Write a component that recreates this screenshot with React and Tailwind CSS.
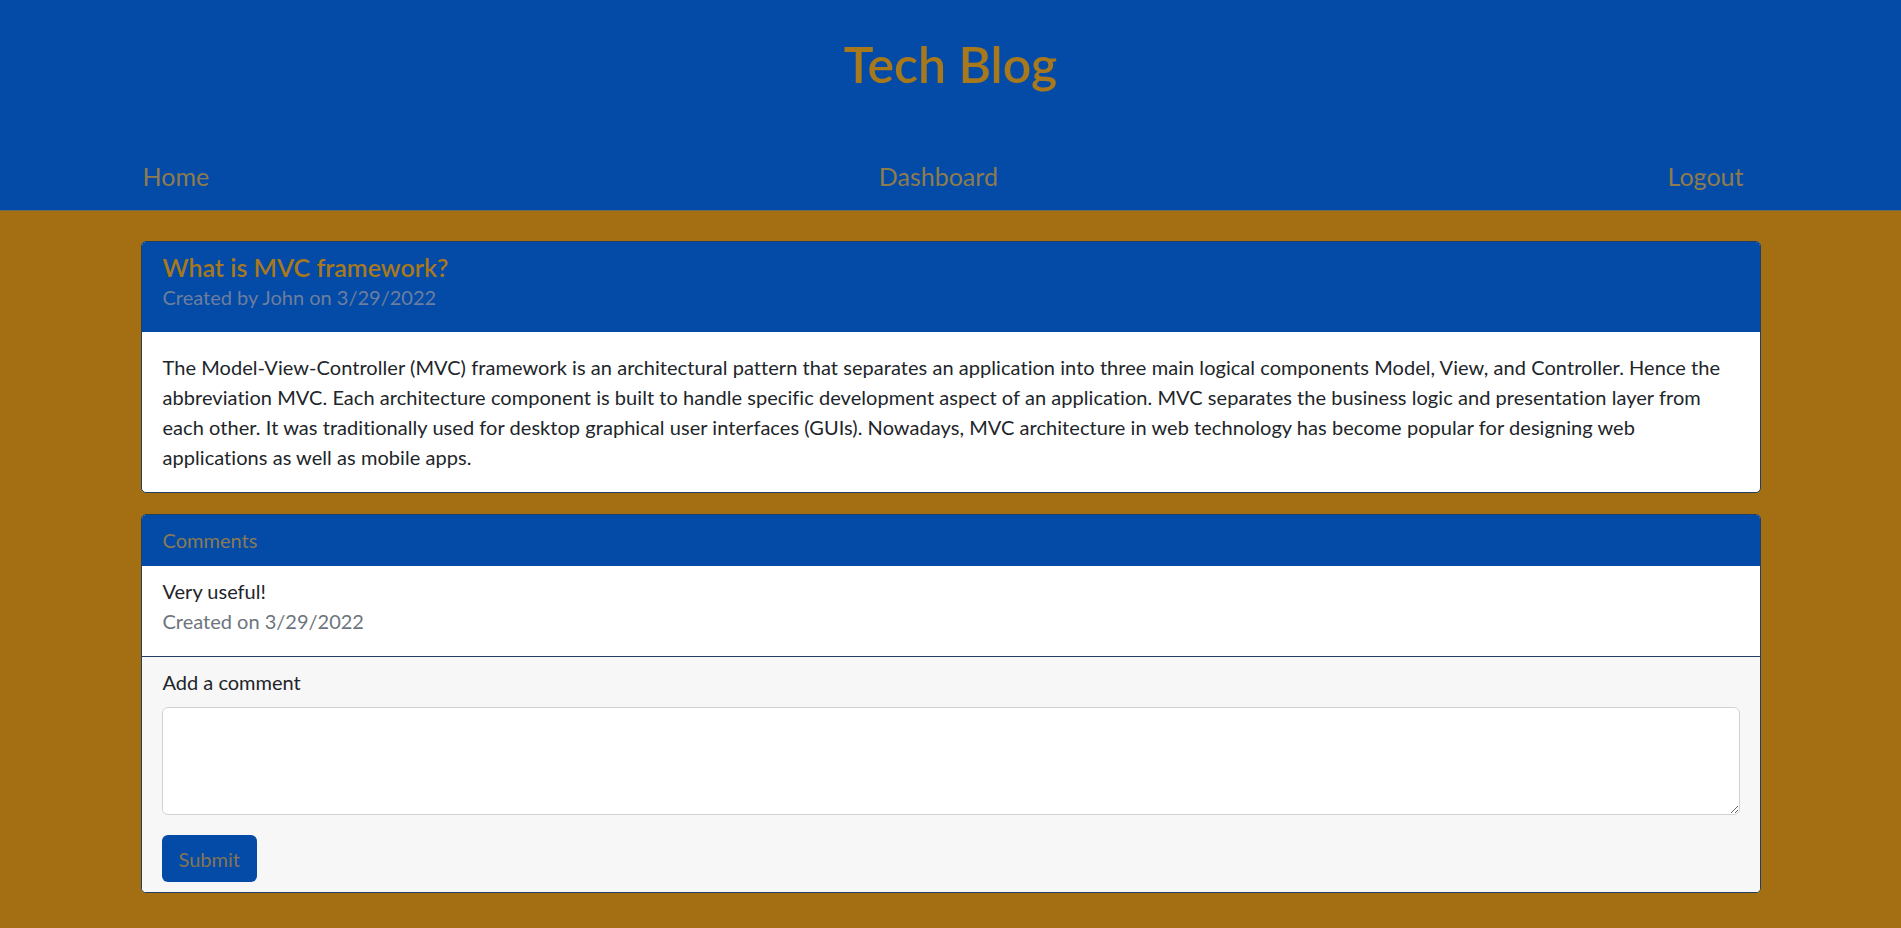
export default function App() {
  return (
    <div className="min-h-screen bg-[#a36f12] font-['Lato',sans-serif] text-[#212529]">
      <header className="h-[211px] bg-[#034ba6] border-b border-[#6f6a58]">
        <h1 className="pt-[34px] text-center text-[50px] leading-[60px] font-semibold text-[#a8781c]">
          Tech Blog
        </h1>
        <nav className="mx-auto mt-[64px] flex w-[1620px] justify-between pl-[2px] pr-[17px] text-[25px] leading-[37px] text-[#8e7b4e]">
          <a href="#">Home</a>
          <a href="#">Dashboard</a>
          <a href="#">Logout</a>
        </nav>
      </header>

      <main className="mx-auto w-[1620px] pt-[30px]">
        <section className="overflow-hidden rounded-[5px] border border-[#1f3f66] bg-white">
          <div className="bg-[#034ba6] px-[21px] pt-[10px] pb-[20px]">
            <h2 className="text-[25px] leading-[30px] font-semibold text-[#a8781c]">
              What is MVC framework?
            </h2>
            <p className="text-[20px] leading-[30px] text-[#6d7e9e]">
              Created by John on 3/29/2022
            </p>
          </div>
          <div className="px-[21px] py-[20px] text-[20px] leading-[30px] tracking-[0.05px]">
            <p>
              The Model-View-Controller (MVC) framework is an architectural pattern that separates an application into three main logical components Model, View, and Controller. Hence the
              <br />
              abbreviation MVC. Each architecture component is built to handle specific development aspect of an application. MVC separates the business logic and presentation layer from
              <br />
              each other. It was traditionally used for desktop graphical user interfaces (GUIs). Nowadays, MVC architecture in web technology has become popular for designing web
              <br />
              applications as well as mobile apps.
            </p>
          </div>
        </section>

        <section className="mt-[21px] overflow-hidden rounded-[5px] border border-[#1f3f66] bg-white">
          <div className="bg-[#034ba6] px-[21px] py-[10px] text-[20px] leading-[30px] text-[#8a7a55]">
            Comments
          </div>
          <div className="border-t border-[#034ba6] px-[21px] pt-[10px] pb-[20px] text-[20px] leading-[30px]">
            <p>Very useful!</p>
            <p className="text-[#6c757d]">Created on 3/29/2022</p>
          </div>
          <form className="border-t border-[#1f3f66] bg-[#f7f7f7] px-[20px] pt-[10px] pb-[10px] text-[20px] leading-[30px]">
            <label className="block pl-[1px]">Add a comment</label>
            <textarea className="mt-[10px] block h-[108px] w-full rounded-[6px] border border-[#d0d3d6] bg-white px-[15px] py-[7px]" />
            <button
              type="button"
              className="mt-[20px] block h-[47px] rounded-[6px] bg-[#034ba6] px-[17px] text-[20px] text-[#857455]"
            >
              Submit
            </button>
          </form>
        </section>
      </main>
    </div>
  );
}
